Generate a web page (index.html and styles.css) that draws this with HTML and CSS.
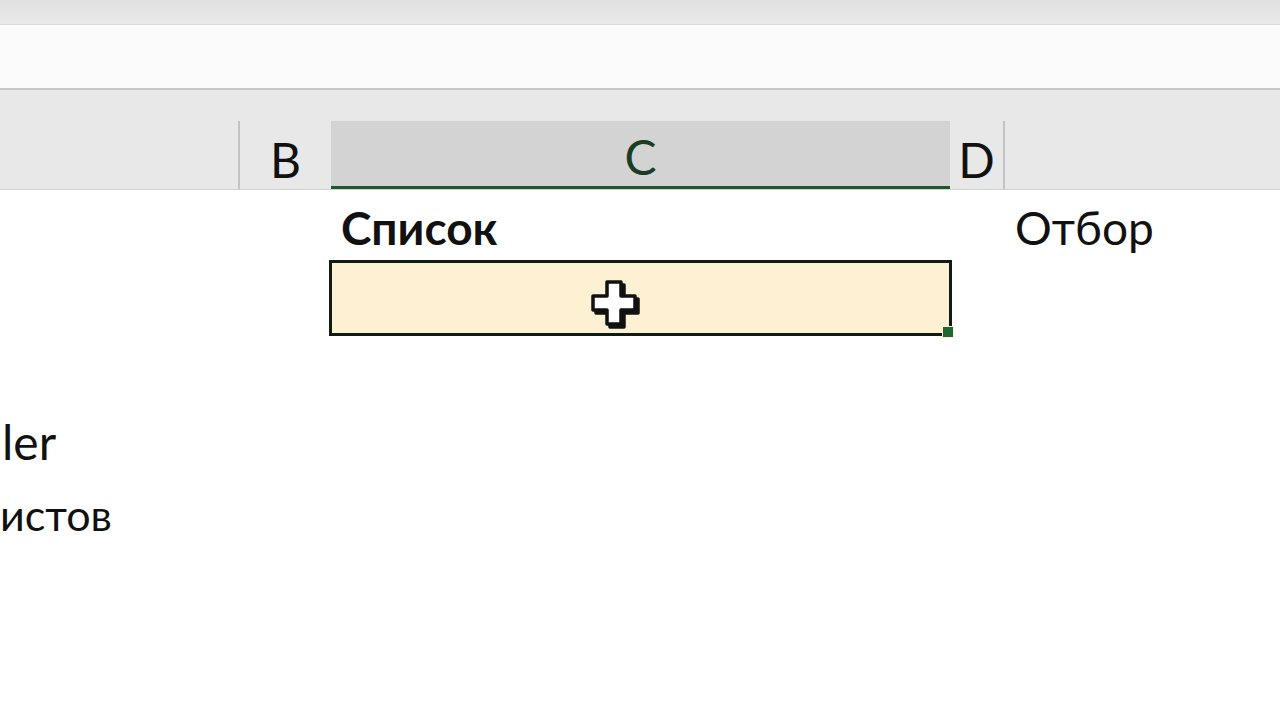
FILE: index.html
```html
<!DOCTYPE html>
<html lang="ru">
<head>
<meta charset="utf-8">
<title>Excel</title>
<link rel="stylesheet" href="styles.css">
</head>
<body>
<div class="app">
  <div class="titlebar"></div>
  <div class="formulabar"></div>
  <div class="colheads">
    <div class="hcell hcol-a"></div>
    <div class="hcell hcol-b">B</div>
    <div class="hcell hcol-c">C</div>
    <div class="hcell hcol-d">D</div>
    <div class="hcell hcol-e"></div>
  </div>
  <div class="sheet">
    <div class="row r1">
      <div class="cell col-a"></div>
      <div class="cell col-b"></div>
      <div class="cell col-c bold">Список</div>
      <div class="cell col-d"></div>
      <div class="cell col-e">Отбор</div>
    </div>
    <div class="row r2">
      <div class="cell col-a"></div>
      <div class="cell col-b"></div>
      <div class="cell col-c selected">
        <span class="handle"></span>
        <svg class="cursor" viewBox="0 0 54 54" width="54" height="54" aria-hidden="true">
          <path d="M18 4 h14 v14 h14 v14 h-14 v14 h-14 v-14 h-14 v-14 h14 z" transform="translate(3 3)" fill="#111" stroke="#111" stroke-width="3.5" stroke-linejoin="round"/>
          <path d="M18 4 h14 v14 h14 v14 h-14 v14 h-14 v-14 h-14 v-14 h14 z" fill="#fff" stroke="#111" stroke-width="3.5" stroke-linejoin="round"/>
        </svg>
      </div>
      <div class="cell col-d"></div>
      <div class="cell col-e"></div>
    </div>
    <div class="row r3">
      <div class="cell col-a"></div>
    </div>
    <div class="row r4">
      <div class="cell col-a"><span class="overflow">ler</span></div>
    </div>
    <div class="row r5">
      <div class="cell col-a"><span class="overflow">истов</span></div>
    </div>
  </div>
</div>
</body>
</html>
```
FILE: styles.css
```css
html, body {
  margin: 0;
  padding: 0;
  background: #ffffff;
}
body {
  font-family: Lato, "Open Sans", "Liberation Sans", sans-serif;
  color: #111;
}
.app {
  width: 1280px;
  height: 720px;
  overflow: hidden;
  display: flex;
  flex-direction: column;
  background: #fff;
}
.titlebar {
  height: 24px;
  background: linear-gradient(#e1e1e1, #e9e9e9);
  border-bottom: 1px solid #dadada;
  flex: none;
}
.formulabar {
  height: 63px;
  background: #fbfbfb;
  border-bottom: 2px solid #c8c8c8;
  flex: none;
}
.colheads {
  height: 68px;
  padding-top: 31px;
  background: #e8e8e8;
  border-bottom: 1px solid #d2d2d2;
  display: flex;
  flex: none;
}
.hcell {
  height: 68px;
  box-sizing: border-box;
  display: flex;
  align-items: center;
  justify-content: center;
  font-size: 48px;
  color: #111;
  padding-top: 8px;
}
.hcol-a { width: 238px; }
.hcol-b { width: 93px; border-left: 2px solid #c3c3c3; }
.hcol-c {
  width: 619px;
  background: #d3d3d3;
  border-bottom: 3px solid #1d5a2b;
  color: #1b3d24;
  padding-top: 6px;
}
.hcol-d { width: 55px; border-right: 2px solid #c3c3c3; }
.hcol-e { flex: 1; }

.sheet {
  flex: 1;
  display: flex;
  flex-direction: column;
}
.row {
  display: flex;
  flex: none;
}
.r1 { height: 70px; }
.r2 { height: 76px; }
.r3 { height: 72px; }
.r4 { height: 72px; }
.r5 { height: 72px; }

.cell {
  box-sizing: border-box;
  display: flex;
  align-items: flex-end;
  font-size: 46px;
  line-height: 1;
  padding-bottom: 9px;
  padding-left: 10px;
  white-space: nowrap;
}
.col-a { width: 238px; padding-left: 0; }
.col-b { width: 93px; }
.col-c { width: 619px; }
.col-d { width: 55px; }
.col-e { flex: 1; padding-left: 10px; }
.bold { font-weight: 700; }

.r4 .col-a { padding-bottom: 14px; padding-left: 2px; font-size: 48px; }
.r5 .col-a { padding-bottom: 16px; font-size: 43px; }

.selected {
  position: relative;
  background: #fdf0d3;
  border: 3px solid #0f1c12;
  margin-left: -2px;
  width: 623px;
  padding: 0;
}
.handle {
  position: absolute;
  right: -5px;
  bottom: -5px;
  width: 10px;
  height: 10px;
  background: #1c6a2e;
  border: 1px solid #fdf0d3;
}
.cursor {
  position: absolute;
  left: 257px;
  top: 15px;
}
```
